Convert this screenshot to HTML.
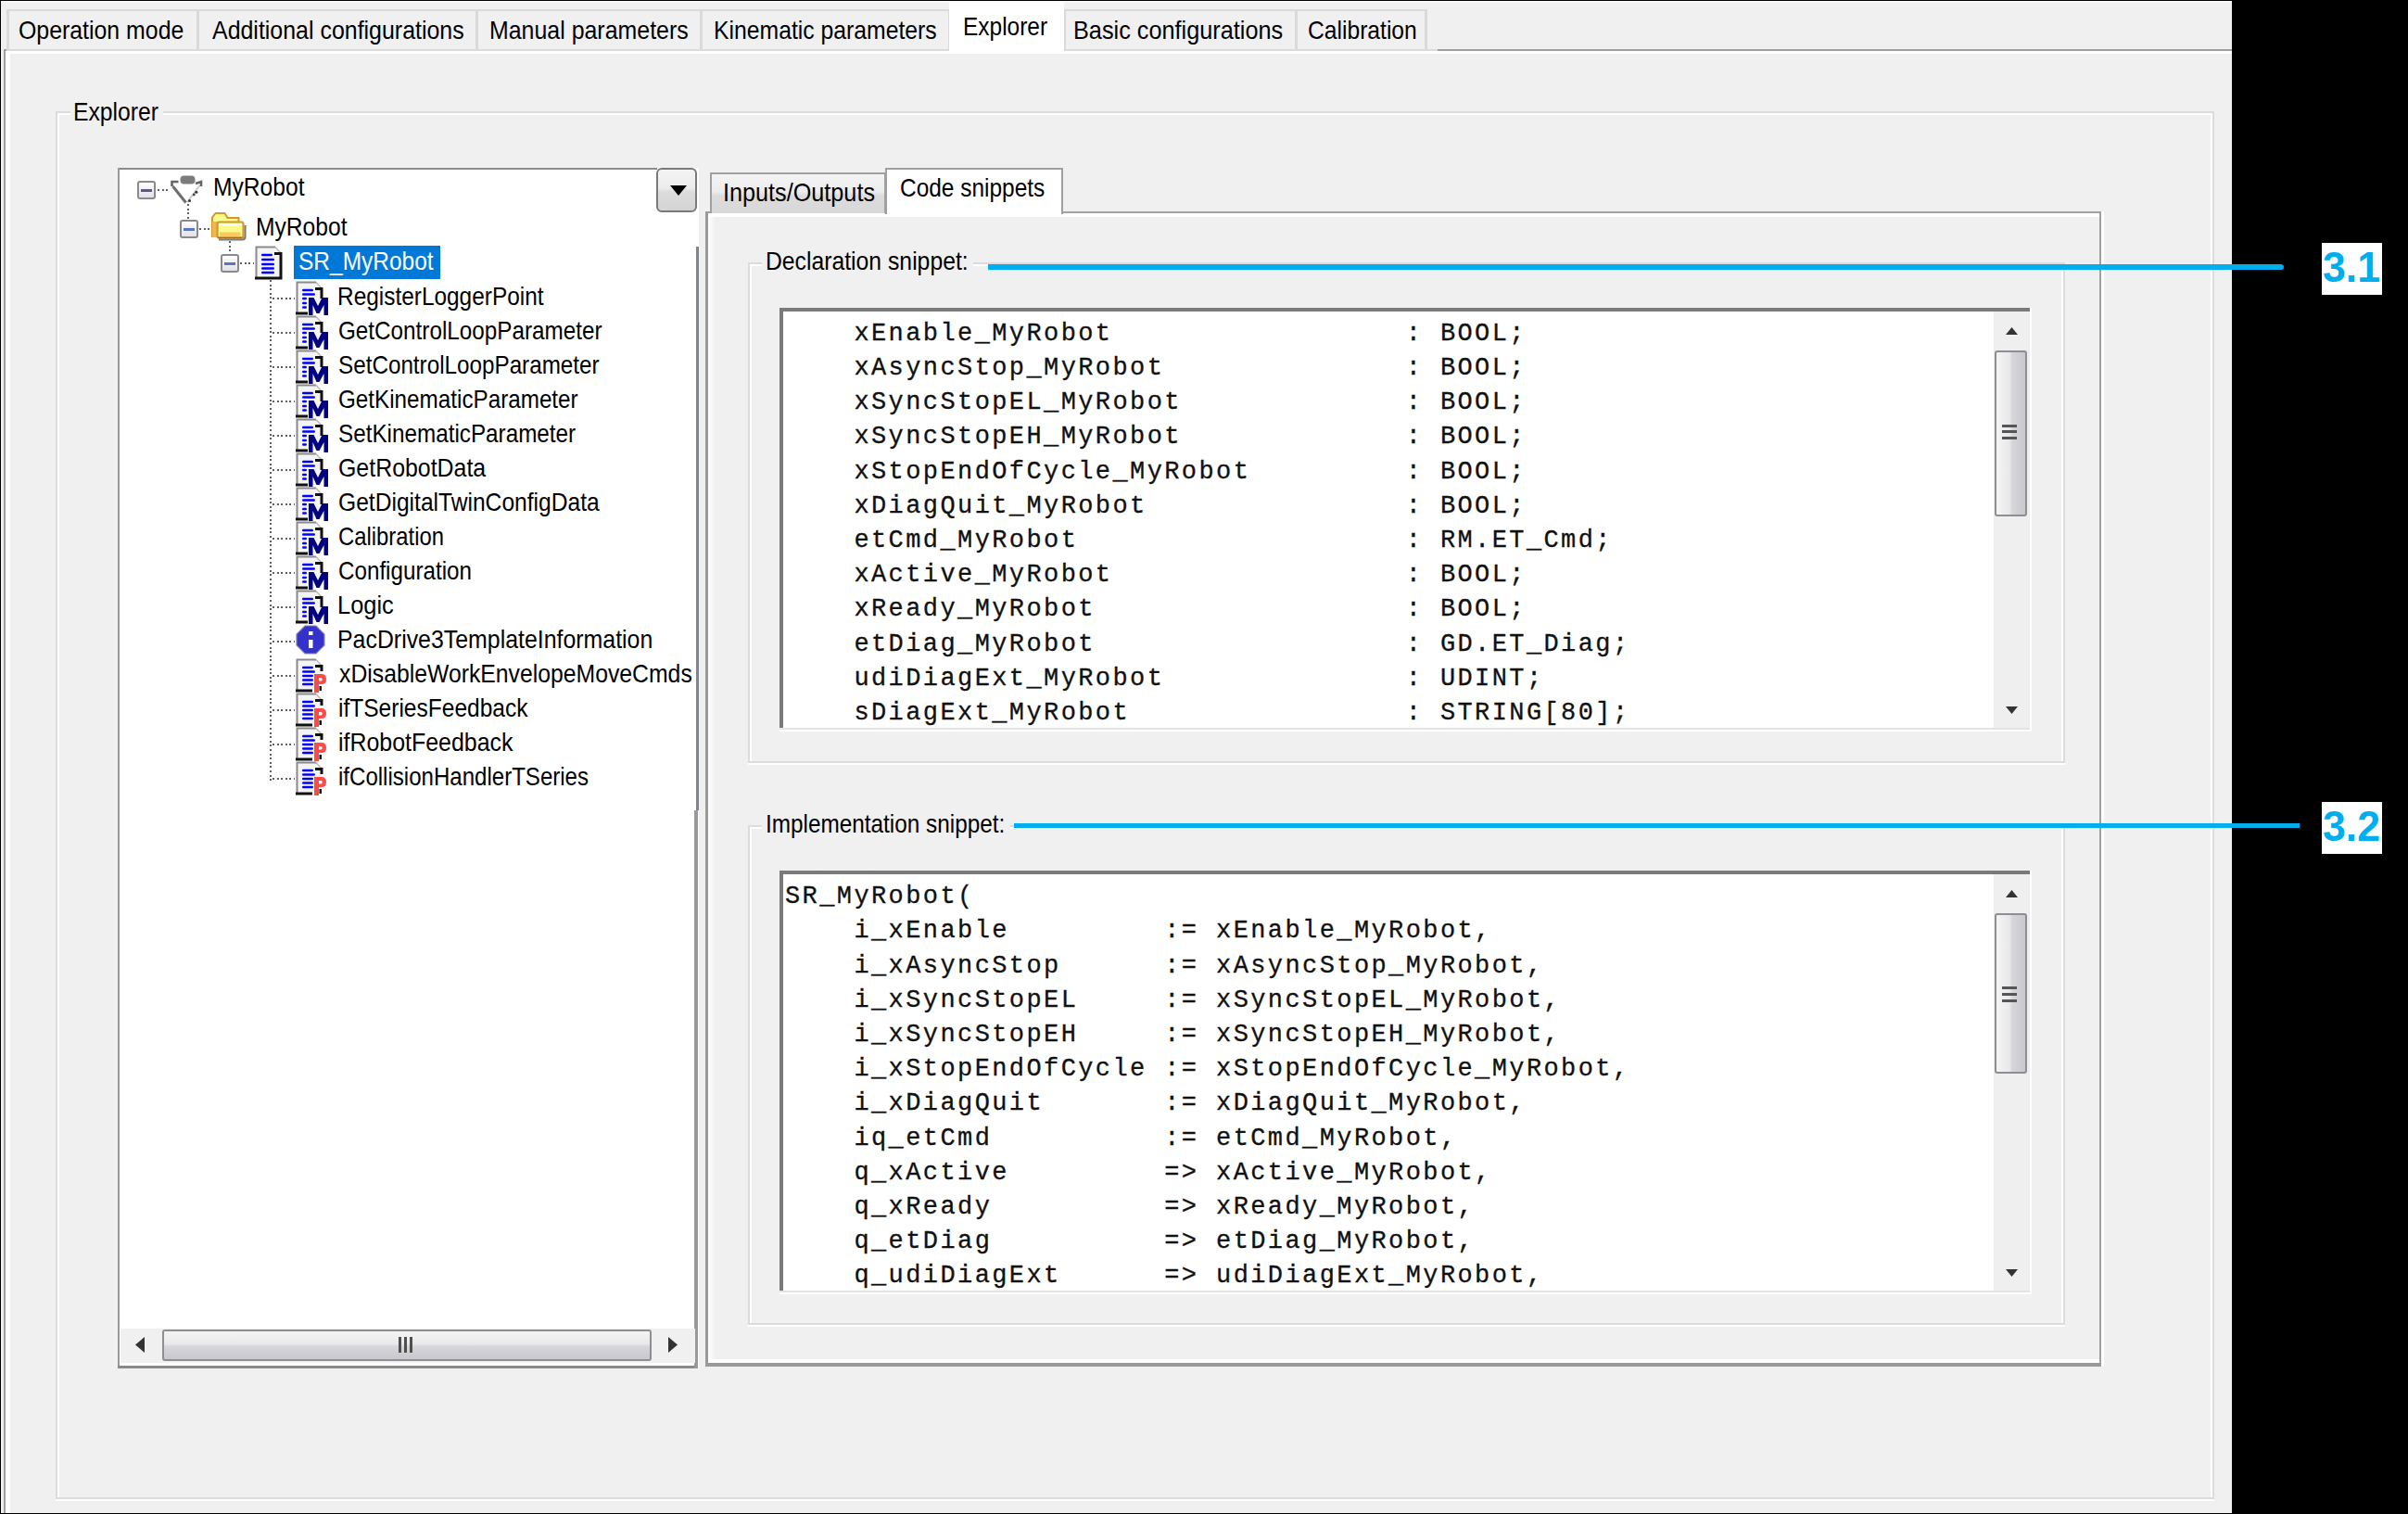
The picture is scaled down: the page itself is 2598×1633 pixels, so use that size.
<!DOCTYPE html><html><head><meta charset="utf-8"><style>
html,body{margin:0;padding:0;}
body{width:2598px;height:1633px;background:#000;position:relative;overflow:hidden;font-family:"Liberation Sans",sans-serif;}
.u{position:absolute;white-space:pre;transform-origin:0 0;font-family:"Liberation Sans",sans-serif;}
.c{position:absolute;white-space:pre;font-family:"Liberation Mono",monospace;font-size:27px;line-height:27px;letter-spacing:2.4px;color:#111;-webkit-text-stroke:0.3px #111;}
</style></head><body>

<div style="position:absolute;left:1px;top:1px;width:2407px;height:1631px;background:#f0f0f0;"></div>
<div style="position:absolute;left:4px;top:53px;width:2404px;height:2px;background:#a0a0a0;"></div>
<div style="position:absolute;left:4px;top:53px;width:2px;height:1579px;background:#a0a0a0;"></div>
<div style="position:absolute;left:6px;top:55px;width:2402px;height:3px;background:#fff;"></div>
<div style="position:absolute;left:6px;top:55px;width:5px;height:1577px;background:#fff;"></div>
<div style="position:absolute;left:1px;top:1px;width:2407px;height:2px;background:#f8f8f8;"></div>
<div style="position:absolute;left:8px;top:10px;width:1531px;height:2px;background:#dadada;"></div>
<div style="position:absolute;left:8px;top:53px;width:1543px;height:2px;background:#dadada;"></div>
<div style="position:absolute;left:7px;top:10px;width:2.5px;height:45px;background:#dadada;"></div>
<div style="position:absolute;left:212px;top:10px;width:2.5px;height:45px;background:#dadada;"></div>
<div style="position:absolute;left:212px;top:10px;width:2.5px;height:45px;background:#dadada;"></div>
<div style="position:absolute;left:513px;top:10px;width:2.5px;height:45px;background:#dadada;"></div>
<div style="position:absolute;left:513px;top:10px;width:2.5px;height:45px;background:#dadada;"></div>
<div style="position:absolute;left:755px;top:10px;width:2.5px;height:45px;background:#dadada;"></div>
<div style="position:absolute;left:755px;top:10px;width:2.5px;height:45px;background:#dadada;"></div>
<div style="position:absolute;left:1023px;top:10px;width:2.5px;height:45px;background:#dadada;"></div>
<div style="position:absolute;left:1147px;top:10px;width:2.5px;height:45px;background:#dadada;"></div>
<div style="position:absolute;left:1397px;top:10px;width:2.5px;height:45px;background:#dadada;"></div>
<div style="position:absolute;left:1397px;top:10px;width:2.5px;height:45px;background:#dadada;"></div>
<div style="position:absolute;left:1537px;top:10px;width:2.5px;height:45px;background:#dadada;"></div>
<div style="position:absolute;left:1024px;top:2px;width:124px;height:56px;background:#fff;"></div>
<div style="position:absolute;left:60px;top:120px;width:2329px;height:2px;background:#dcdcdc;"></div>
<div style="position:absolute;left:60px;top:120px;width:2px;height:1499px;background:#dcdcdc;"></div>
<div style="position:absolute;left:62px;top:122px;width:2327px;height:2px;background:#fff;"></div>
<div style="position:absolute;left:62px;top:122px;width:2px;height:1497px;background:#fff;"></div>
<div style="position:absolute;left:2387px;top:120px;width:2px;height:1499px;background:#dcdcdc;"></div>
<div style="position:absolute;left:2385px;top:122px;width:2px;height:1495px;background:#fff;"></div>
<div style="position:absolute;left:60px;top:1617px;width:2329px;height:2px;background:#fff;"></div>
<div style="position:absolute;left:62px;top:1615px;width:2325px;height:2px;background:#dcdcdc;"></div>
<div style="position:absolute;left:76px;top:108px;width:100px;height:20px;background:#f0f0f0;"></div>
<div style="position:absolute;left:127px;top:181px;width:627px;height:1295px;background:#fff;"></div>
<div style="position:absolute;left:127px;top:181px;width:582px;height:2px;background:#8c8c8c;"></div>
<div style="position:absolute;left:127px;top:181px;width:2px;height:1295px;background:#999;"></div>
<div style="position:absolute;left:127px;top:1473px;width:626px;height:3px;background:#8a8a8a;"></div>
<div style="position:absolute;left:751px;top:266px;width:3px;height:608px;background:#7f8590;"></div>
<div style="position:absolute;left:749px;top:874px;width:4px;height:602px;background:#999;"></div>
<div style="position:absolute;left:708px;top:181px;width:44px;height:48px;box-sizing:border-box;border:2px solid #7a7a7a;border-radius:6px;background:linear-gradient(#f4f4f4 0%,#ececec 45%,#dcdcdc 55%,#d4d4d4 100%);"></div>
<svg style="position:absolute;left:723px;top:200px" width="19" height="12"><polygon points="0,0 18,0 9,11" fill="#000"/></svg>
<div style="position:absolute;left:130px;top:1433px;width:620px;height:37px;background:#f0f0f0;"></div>
<div style="position:absolute;left:175px;top:1434px;width:528px;height:34px;box-sizing:border-box;border:2px solid #8e8f94;border-radius:3px;background:linear-gradient(#f4f4f5 0%,#e9e9eb 45%,#d6d6da 55%,#c8c8cd 100%);"></div>
<svg style="position:absolute;left:145px;top:1442px" width="12" height="18"><polygon points="11,0 11,17 1,8.5" fill="#333"/></svg>
<svg style="position:absolute;left:720px;top:1442px" width="12" height="18"><polygon points="1,0 1,17 11,8.5" fill="#333"/></svg>
<div style="position:absolute;left:430px;top:1442px;width:3px;height:17px;background:#505050;"></div>
<div style="position:absolute;left:436px;top:1442px;width:3px;height:17px;background:#505050;"></div>
<div style="position:absolute;left:442px;top:1442px;width:3px;height:17px;background:#505050;"></div>
<div style="position:absolute;left:761px;top:228px;width:1509px;height:1246px;background:#f0f0f0;"></div>
<div style="position:absolute;left:761px;top:228px;width:1509px;height:2px;background:#a0a0a0;"></div>
<div style="position:absolute;left:761px;top:228px;width:3px;height:1246px;background:#999;"></div>
<div style="position:absolute;left:2265px;top:228px;width:2px;height:1246px;background:#a0a0a0;"></div>
<div style="position:absolute;left:761px;top:1470px;width:1507px;height:4px;background:#999;"></div>
<div style="position:absolute;left:764px;top:230px;width:8px;height:1240px;background:linear-gradient(90deg,#fff,#f0f0f0);"></div>
<div style="position:absolute;left:764px;top:230px;width:1501px;height:4px;background:#fff;"></div>
<div style="position:absolute;left:2267px;top:228px;width:3px;height:1246px;background:#fff;"></div>
<div style="position:absolute;left:764px;top:1466px;width:1501px;height:4px;background:#fff;"></div>
<div style="position:absolute;left:766px;top:186px;width:190px;height:44px;box-sizing:border-box;border:2px solid #a0a0a0;border-bottom:none;background:linear-gradient(#f4f4f4 0%,#ececec 45%,#dcdcdc 55%,#d8d8d8 100%);"></div>
<div style="position:absolute;left:955px;top:181px;width:192px;height:50px;box-sizing:border-box;border:2px solid #a0a0a0;border-bottom:none;background:#fff;"></div>
<div style="position:absolute;left:807px;top:283px;width:1421px;height:2px;background:#dcdcdc;"></div>
<div style="position:absolute;left:807px;top:283px;width:2px;height:542px;background:#dcdcdc;"></div>
<div style="position:absolute;left:809px;top:285px;width:1419px;height:2px;background:#fff;"></div>
<div style="position:absolute;left:809px;top:285px;width:2px;height:540px;background:#fff;"></div>
<div style="position:absolute;left:2226px;top:283px;width:2px;height:542px;background:#dcdcdc;"></div>
<div style="position:absolute;left:2224px;top:285px;width:2px;height:538px;background:#fff;"></div>
<div style="position:absolute;left:807px;top:823px;width:1421px;height:2px;background:#fff;"></div>
<div style="position:absolute;left:809px;top:821px;width:1417px;height:2px;background:#dcdcdc;"></div>
<div style="position:absolute;left:807px;top:890px;width:1421px;height:2px;background:#dcdcdc;"></div>
<div style="position:absolute;left:807px;top:890px;width:2px;height:541px;background:#dcdcdc;"></div>
<div style="position:absolute;left:809px;top:892px;width:1419px;height:2px;background:#fff;"></div>
<div style="position:absolute;left:809px;top:892px;width:2px;height:539px;background:#fff;"></div>
<div style="position:absolute;left:2226px;top:890px;width:2px;height:541px;background:#dcdcdc;"></div>
<div style="position:absolute;left:2224px;top:892px;width:2px;height:537px;background:#fff;"></div>
<div style="position:absolute;left:807px;top:1429px;width:1421px;height:2px;background:#fff;"></div>
<div style="position:absolute;left:809px;top:1427px;width:1417px;height:2px;background:#dcdcdc;"></div>
<div style="position:absolute;left:822px;top:266px;width:228px;height:32px;background:#f0f0f0;"></div>
<div style="position:absolute;left:822px;top:874px;width:268px;height:32px;background:#f0f0f0;"></div>
<div style="position:absolute;left:841px;top:332px;width:1349px;height:457px;background:#fff;"></div>
<div style="position:absolute;left:841px;top:332px;width:1349px;height:4px;background:#7a7a7a;"></div>
<div style="position:absolute;left:841px;top:332px;width:4px;height:457px;background:#7a7a7a;"></div>
<div style="position:absolute;left:841px;top:785px;width:1351px;height:2px;background:#e3e3e3;"></div>
<div style="position:absolute;left:841px;top:787px;width:1351px;height:2px;background:#fff;"></div>
<div style="position:absolute;left:2190px;top:332px;width:2px;height:457px;background:#fff;"></div>
<div style="position:absolute;left:2151px;top:336px;width:39px;height:449px;background:#efefef;"></div>
<svg style="position:absolute;left:2164px;top:353px" width="14" height="9"><polygon points="0,8 13,8 6.5,0" fill="#333"/></svg>
<svg style="position:absolute;left:2164px;top:762px" width="14" height="9"><polygon points="0,0 13,0 6.5,8" fill="#333"/></svg>
<div style="position:absolute;left:2152px;top:378px;width:35px;height:179px;box-sizing:border-box;border:2px solid #8e8f94;border-radius:3px;background:linear-gradient(90deg,#f4f4f5 0%,#e9e9eb 45%,#d6d6da 55%,#c8c8cd 100%);"></div>
<div style="position:absolute;left:2160px;top:457.5px;width:16px;height:3.0px;background:#555;"></div>
<div style="position:absolute;left:2160px;top:464.3px;width:16px;height:3.0px;background:#555;"></div>
<div style="position:absolute;left:2160px;top:471.1px;width:16px;height:3.0px;background:#555;"></div>
<div style="position:absolute;left:841px;top:939px;width:1349px;height:457px;background:#fff;"></div>
<div style="position:absolute;left:841px;top:939px;width:1349px;height:4px;background:#7a7a7a;"></div>
<div style="position:absolute;left:841px;top:939px;width:4px;height:457px;background:#7a7a7a;"></div>
<div style="position:absolute;left:841px;top:1392px;width:1351px;height:2px;background:#e3e3e3;"></div>
<div style="position:absolute;left:841px;top:1394px;width:1351px;height:2px;background:#fff;"></div>
<div style="position:absolute;left:2190px;top:939px;width:2px;height:457px;background:#fff;"></div>
<div style="position:absolute;left:2151px;top:943px;width:39px;height:449px;background:#efefef;"></div>
<svg style="position:absolute;left:2164px;top:960px" width="14" height="9"><polygon points="0,8 13,8 6.5,0" fill="#333"/></svg>
<svg style="position:absolute;left:2164px;top:1369px" width="14" height="9"><polygon points="0,0 13,0 6.5,8" fill="#333"/></svg>
<div style="position:absolute;left:2152px;top:985px;width:35px;height:173px;box-sizing:border-box;border:2px solid #8e8f94;border-radius:3px;background:linear-gradient(90deg,#f4f4f5 0%,#e9e9eb 45%,#d6d6da 55%,#c8c8cd 100%);"></div>
<div style="position:absolute;left:2160px;top:1064.0px;width:16px;height:3.0px;background:#555;"></div>
<div style="position:absolute;left:2160px;top:1070.8px;width:16px;height:3.0px;background:#555;"></div>
<div style="position:absolute;left:2160px;top:1077.6px;width:16px;height:3.0px;background:#555;"></div>
<div style="position:absolute;left:1066px;top:285px;width:1398px;height:6px;background:#00aeef;border-radius:0 3px 3px 0;"></div>
<div style="position:absolute;left:1094px;top:888px;width:1387px;height:5px;background:#00aeef;"></div>
<div style="position:absolute;left:2505px;top:262px;width:65px;height:56px;background:#fff;"></div>
<div style="position:absolute;left:2505px;top:865px;width:65px;height:56px;background:#fff;"></div>
<div class="u" style="left:19.6px;top:18.8px;font-size:28px;line-height:28px;color:#000;transform:scaleX(0.888);">Operation mode</div>
<div class="u" style="left:228.7px;top:18.8px;font-size:28px;line-height:28px;color:#000;transform:scaleX(0.8905);">Additional configurations</div>
<div class="u" style="left:528.2px;top:18.8px;font-size:28px;line-height:28px;color:#000;transform:scaleX(0.8899);">Manual parameters</div>
<div class="u" style="left:770.2px;top:18.8px;font-size:28px;line-height:28px;color:#000;transform:scaleX(0.8837);">Kinematic parameters</div>
<div class="u" style="left:1039.3px;top:14.9px;font-size:28px;line-height:28px;color:#000;transform:scaleX(0.8731);">Explorer</div>
<div class="u" style="left:1157.7px;top:18.8px;font-size:28px;line-height:28px;color:#000;transform:scaleX(0.9027);">Basic configurations</div>
<div class="u" style="left:1411.1px;top:18.8px;font-size:28px;line-height:28px;color:#000;transform:scaleX(0.8798);">Calibration</div>
<div class="u" style="left:79.2px;top:107.3px;font-size:28px;line-height:28px;color:#000;transform:scaleX(0.8829);">Explorer</div>
<div class="u" style="left:779.9px;top:194.1px;font-size:28px;line-height:28px;color:#000;transform:scaleX(0.9006);">Inputs/Outputs</div>
<div class="u" style="left:971.1px;top:189.2px;font-size:28px;line-height:28px;color:#000;transform:scaleX(0.8729);">Code snippets</div>
<div class="u" style="left:825.7px;top:267.5px;font-size:28px;line-height:28px;color:#000;transform:scaleX(0.8835);">Declaration snippet:</div>
<div class="u" style="left:826.3px;top:875.3px;font-size:28px;line-height:28px;color:#000;transform:scaleX(0.8688);">Implementation snippet:</div>
<div class="u" style="left:230.2px;top:188.3px;font-size:28px;line-height:28px;color:#000;transform:scaleX(0.8797);">MyRobot</div>
<div class="u" style="left:276.2px;top:231.0px;font-size:28px;line-height:28px;color:#000;transform:scaleX(0.8797);">MyRobot</div>
<div class="u" style="left:363.8px;top:305.8px;font-size:28px;line-height:28px;color:#000;transform:scaleX(0.8718);">RegisterLoggerPoint</div>
<div class="u" style="left:364.6px;top:342.8px;font-size:28px;line-height:28px;color:#000;transform:scaleX(0.8662);">GetControlLoopParameter</div>
<div class="u" style="left:364.6px;top:379.8px;font-size:28px;line-height:28px;color:#000;transform:scaleX(0.8658);">SetControlLoopParameter</div>
<div class="u" style="left:364.6px;top:416.8px;font-size:28px;line-height:28px;color:#000;transform:scaleX(0.8657);">GetKinematicParameter</div>
<div class="u" style="left:364.6px;top:453.8px;font-size:28px;line-height:28px;color:#000;transform:scaleX(0.8663);">SetKinematicParameter</div>
<div class="u" style="left:364.6px;top:490.8px;font-size:28px;line-height:28px;color:#000;transform:scaleX(0.8895);">GetRobotData</div>
<div class="u" style="left:364.6px;top:527.8px;font-size:28px;line-height:28px;color:#000;transform:scaleX(0.8787);">GetDigitalTwinConfigData</div>
<div class="u" style="left:364.6px;top:564.8px;font-size:28px;line-height:28px;color:#000;transform:scaleX(0.8516);">Calibration</div>
<div class="u" style="left:364.6px;top:601.8px;font-size:28px;line-height:28px;color:#000;transform:scaleX(0.8641);">Configuration</div>
<div class="u" style="left:363.7px;top:638.8px;font-size:28px;line-height:28px;color:#000;transform:scaleX(0.9086);">Logic</div>
<div class="u" style="left:363.7px;top:675.8px;font-size:28px;line-height:28px;color:#000;transform:scaleX(0.8888);">PacDrive3TemplateInformation</div>
<div class="u" style="left:365.5px;top:712.8px;font-size:28px;line-height:28px;color:#000;transform:scaleX(0.8844);">xDisableWorkEnvelopeMoveCmds</div>
<div class="u" style="left:364.6px;top:749.8px;font-size:28px;line-height:28px;color:#000;transform:scaleX(0.8761);">ifTSeriesFeedback</div>
<div class="u" style="left:364.6px;top:786.8px;font-size:28px;line-height:28px;color:#000;transform:scaleX(0.8905);">ifRobotFeedback</div>
<div class="u" style="left:364.6px;top:823.8px;font-size:28px;line-height:28px;color:#000;transform:scaleX(0.859);">ifCollisionHandlerTSeries</div>
<div style="position:absolute;left:317px;top:265px;width:158px;height:36px;background:#0078d7;"></div>
<div class="u" style="left:322.1px;top:268.3px;font-size:28px;line-height:28px;color:#fff;transform:scaleX(0.8749);">SR_MyRobot</div>
<div style="position:absolute;left:148px;top:195px;width:20px;height:20px;box-sizing:border-box;border:2px solid #8a8a8a;border-radius:3px;background:linear-gradient(#fdfdfd,#e2e2ea);"></div>
<div style="position:absolute;left:152px;top:204px;width:12px;height:3px;background:#5a5a7a;"></div>
<div style="position:absolute;left:194px;top:237px;width:20px;height:20px;box-sizing:border-box;border:2px solid #8a8a8a;border-radius:3px;background:linear-gradient(#fdfdfd,#e2e2ea);"></div>
<div style="position:absolute;left:198px;top:246px;width:12px;height:3px;background:#5a78c0;"></div>
<div style="position:absolute;left:238px;top:274px;width:20px;height:20px;box-sizing:border-box;border:2px solid #8a8a8a;border-radius:3px;background:linear-gradient(#fdfdfd,#e2e2ea);"></div>
<div style="position:absolute;left:242px;top:283px;width:12px;height:3px;background:#5a78c0;"></div>
<div style="position:absolute;left:170px;top:204px;width:14px;height:2px;background:repeating-linear-gradient(90deg,#606060 0 2px,transparent 2px 4.6px);"></div>
<div style="position:absolute;left:201.5px;top:220px;width:2px;height:17px;background:repeating-linear-gradient(180deg,#606060 0 2px,transparent 2px 4.6px);"></div>
<div style="position:absolute;left:215px;top:246px;width:13px;height:2px;background:repeating-linear-gradient(90deg,#606060 0 2px,transparent 2px 4.6px);"></div>
<div style="position:absolute;left:247px;top:260px;width:2px;height:14px;background:repeating-linear-gradient(180deg,#606060 0 2px,transparent 2px 4.6px);"></div>
<div style="position:absolute;left:259px;top:283px;width:15px;height:2px;background:repeating-linear-gradient(90deg,#606060 0 2px,transparent 2px 4.6px);"></div>
<div style="position:absolute;left:291px;top:302px;width:2px;height:539.5px;background:repeating-linear-gradient(180deg,#606060 0 2px,transparent 2px 4.6px);"></div>
<div style="position:absolute;left:294px;top:320.5px;width:24px;height:2px;background:repeating-linear-gradient(90deg,#606060 0 2px,transparent 2px 4.6px);"></div>
<div style="position:absolute;left:294px;top:357.5px;width:24px;height:2px;background:repeating-linear-gradient(90deg,#606060 0 2px,transparent 2px 4.6px);"></div>
<div style="position:absolute;left:294px;top:394.5px;width:24px;height:2px;background:repeating-linear-gradient(90deg,#606060 0 2px,transparent 2px 4.6px);"></div>
<div style="position:absolute;left:294px;top:431.5px;width:24px;height:2px;background:repeating-linear-gradient(90deg,#606060 0 2px,transparent 2px 4.6px);"></div>
<div style="position:absolute;left:294px;top:468.5px;width:24px;height:2px;background:repeating-linear-gradient(90deg,#606060 0 2px,transparent 2px 4.6px);"></div>
<div style="position:absolute;left:294px;top:505.5px;width:24px;height:2px;background:repeating-linear-gradient(90deg,#606060 0 2px,transparent 2px 4.6px);"></div>
<div style="position:absolute;left:294px;top:542.5px;width:24px;height:2px;background:repeating-linear-gradient(90deg,#606060 0 2px,transparent 2px 4.6px);"></div>
<div style="position:absolute;left:294px;top:579.5px;width:24px;height:2px;background:repeating-linear-gradient(90deg,#606060 0 2px,transparent 2px 4.6px);"></div>
<div style="position:absolute;left:294px;top:616.5px;width:24px;height:2px;background:repeating-linear-gradient(90deg,#606060 0 2px,transparent 2px 4.6px);"></div>
<div style="position:absolute;left:294px;top:653.5px;width:24px;height:2px;background:repeating-linear-gradient(90deg,#606060 0 2px,transparent 2px 4.6px);"></div>
<div style="position:absolute;left:294px;top:690.5px;width:24px;height:2px;background:repeating-linear-gradient(90deg,#606060 0 2px,transparent 2px 4.6px);"></div>
<div style="position:absolute;left:294px;top:727.5px;width:24px;height:2px;background:repeating-linear-gradient(90deg,#606060 0 2px,transparent 2px 4.6px);"></div>
<div style="position:absolute;left:294px;top:764.5px;width:24px;height:2px;background:repeating-linear-gradient(90deg,#606060 0 2px,transparent 2px 4.6px);"></div>
<div style="position:absolute;left:294px;top:801.5px;width:24px;height:2px;background:repeating-linear-gradient(90deg,#606060 0 2px,transparent 2px 4.6px);"></div>
<div style="position:absolute;left:294px;top:838.5px;width:24px;height:2px;background:repeating-linear-gradient(90deg,#606060 0 2px,transparent 2px 4.6px);"></div>
<svg style="position:absolute;left:180px;top:184px" width="46" height="40" viewBox="0 0 46 40">
<path d="M35.5,16 L22,34" stroke="#c8c8c8" stroke-width="2" fill="none"/>
<path d="M6.5,17 L20.5,34.5" stroke="#6e6e6e" stroke-width="3" fill="none"/>
<path d="M5.5,17 V12 H12.5" stroke="#666" stroke-width="2.6" fill="none"/>
<path d="M31,14 L37,12 V17" stroke="#666" stroke-width="2.6" fill="none"/>
<rect x="14.5" y="5.5" width="16" height="9" rx="4" fill="#7c7c7c"/>
<circle cx="31.8" cy="23.3" r="1.5" fill="#333"/><circle cx="29.3" cy="26" r="1.4" fill="#444"/><circle cx="24.5" cy="32.5" r="1.5" fill="#333"/>
</svg>
<svg style="position:absolute;left:224px;top:222px" width="46" height="40" viewBox="0 0 46 40">
<path d="M5,34 V12.5 L8.5,8 H18.5 L21.5,13 H33.5 V18 H10z" fill="#fafa8a" stroke="#d09a30" stroke-width="2"/>
<rect x="5" y="17" width="6" height="17" fill="#f2b850"/>
<path d="M12,36.5 H37.5 Q40.5,36.5 40.5,33.5 V21" stroke="#5a5a5a" stroke-width="2.2" fill="none" opacity="0.8"/>
<rect x="10.5" y="17.5" width="28" height="17" rx="2" fill="#fafa8a" stroke="#cf9a2e" stroke-width="2.2"/>
<rect x="13" y="28.5" width="22.5" height="5" fill="#fcc860"/>
<rect x="12" y="19.5" width="25" height="1.8" fill="#fff"/>
<path d="M11.5,34.5 H37.5" stroke="#a06a10" stroke-width="1.6"/>
</svg>
<svg style="position:absolute;left:274.5px;top:264.5px" width="31" height="37" viewBox="0 0 31 37"><path d="M1.5,35 V1.5 H22 L28,8 V35z" fill="#f4f4f4"/><path d="M1.5,35 V1.5 H22" fill="none" stroke="#8a8a8a" stroke-width="2"/><path d="M22,1.5 L28,8" fill="none" stroke="#bbb" stroke-width="1.5"/><path d="M21,8.5 H28 V35 H0" fill="none" stroke="#111" stroke-width="3"/><rect x="7" y="8.7" width="12" height="2.6" rx="1.3" fill="#0000ff"/><rect x="7" y="13.7" width="14" height="2.6" rx="1.3" fill="#0000ff"/><rect x="7" y="18.7" width="14" height="2.6" rx="1.3" fill="#0000ff"/><rect x="7" y="23.2" width="14" height="2.6" rx="1.3" fill="#0000ff"/><rect x="7" y="27.7" width="14" height="2.6" rx="1.3" fill="#0000ff"/></svg>
<svg style="position:absolute;left:319px;top:302.5px" width="37" height="38" viewBox="0 0 37 38"><path d="M1.5,35 V1.5 H22 L28,8 V35z" fill="#f4f4f4"/><path d="M1.5,35 V1.5 H22" fill="none" stroke="#8a8a8a" stroke-width="2"/><path d="M22,1.5 L28,8" fill="none" stroke="#bbb" stroke-width="1.5"/><path d="M21,8.5 H28 V19" fill="none" stroke="#111" stroke-width="3"/><path d="M0,35 H13" fill="none" stroke="#111" stroke-width="3"/><rect x="7" y="8.7" width="12" height="2.6" rx="1.3" fill="#0000ff"/><rect x="7" y="13.2" width="14" height="2.6" rx="1.3" fill="#0000ff"/><rect x="7" y="17.7" width="5" height="2.6" rx="1.3" fill="#0000ff"/><rect x="7" y="22.7" width="5" height="2.6" rx="1.3" fill="#0000ff"/><rect x="7" y="27.2" width="5" height="2.6" rx="1.3" fill="#0000ff"/><path d="M14,37 V18 H19.5 L24,27 L28.5,18 H35 V37 H30.5 V26 L25.5,35 H22.5 L18.5,26 V37z" fill="#000080"/></svg>
<svg style="position:absolute;left:319px;top:339.5px" width="37" height="38" viewBox="0 0 37 38"><path d="M1.5,35 V1.5 H22 L28,8 V35z" fill="#f4f4f4"/><path d="M1.5,35 V1.5 H22" fill="none" stroke="#8a8a8a" stroke-width="2"/><path d="M22,1.5 L28,8" fill="none" stroke="#bbb" stroke-width="1.5"/><path d="M21,8.5 H28 V19" fill="none" stroke="#111" stroke-width="3"/><path d="M0,35 H13" fill="none" stroke="#111" stroke-width="3"/><rect x="7" y="8.7" width="12" height="2.6" rx="1.3" fill="#0000ff"/><rect x="7" y="13.2" width="14" height="2.6" rx="1.3" fill="#0000ff"/><rect x="7" y="17.7" width="5" height="2.6" rx="1.3" fill="#0000ff"/><rect x="7" y="22.7" width="5" height="2.6" rx="1.3" fill="#0000ff"/><rect x="7" y="27.2" width="5" height="2.6" rx="1.3" fill="#0000ff"/><path d="M14,37 V18 H19.5 L24,27 L28.5,18 H35 V37 H30.5 V26 L25.5,35 H22.5 L18.5,26 V37z" fill="#000080"/></svg>
<svg style="position:absolute;left:319px;top:376.5px" width="37" height="38" viewBox="0 0 37 38"><path d="M1.5,35 V1.5 H22 L28,8 V35z" fill="#f4f4f4"/><path d="M1.5,35 V1.5 H22" fill="none" stroke="#8a8a8a" stroke-width="2"/><path d="M22,1.5 L28,8" fill="none" stroke="#bbb" stroke-width="1.5"/><path d="M21,8.5 H28 V19" fill="none" stroke="#111" stroke-width="3"/><path d="M0,35 H13" fill="none" stroke="#111" stroke-width="3"/><rect x="7" y="8.7" width="12" height="2.6" rx="1.3" fill="#0000ff"/><rect x="7" y="13.2" width="14" height="2.6" rx="1.3" fill="#0000ff"/><rect x="7" y="17.7" width="5" height="2.6" rx="1.3" fill="#0000ff"/><rect x="7" y="22.7" width="5" height="2.6" rx="1.3" fill="#0000ff"/><rect x="7" y="27.2" width="5" height="2.6" rx="1.3" fill="#0000ff"/><path d="M14,37 V18 H19.5 L24,27 L28.5,18 H35 V37 H30.5 V26 L25.5,35 H22.5 L18.5,26 V37z" fill="#000080"/></svg>
<svg style="position:absolute;left:319px;top:413.5px" width="37" height="38" viewBox="0 0 37 38"><path d="M1.5,35 V1.5 H22 L28,8 V35z" fill="#f4f4f4"/><path d="M1.5,35 V1.5 H22" fill="none" stroke="#8a8a8a" stroke-width="2"/><path d="M22,1.5 L28,8" fill="none" stroke="#bbb" stroke-width="1.5"/><path d="M21,8.5 H28 V19" fill="none" stroke="#111" stroke-width="3"/><path d="M0,35 H13" fill="none" stroke="#111" stroke-width="3"/><rect x="7" y="8.7" width="12" height="2.6" rx="1.3" fill="#0000ff"/><rect x="7" y="13.2" width="14" height="2.6" rx="1.3" fill="#0000ff"/><rect x="7" y="17.7" width="5" height="2.6" rx="1.3" fill="#0000ff"/><rect x="7" y="22.7" width="5" height="2.6" rx="1.3" fill="#0000ff"/><rect x="7" y="27.2" width="5" height="2.6" rx="1.3" fill="#0000ff"/><path d="M14,37 V18 H19.5 L24,27 L28.5,18 H35 V37 H30.5 V26 L25.5,35 H22.5 L18.5,26 V37z" fill="#000080"/></svg>
<svg style="position:absolute;left:319px;top:450.5px" width="37" height="38" viewBox="0 0 37 38"><path d="M1.5,35 V1.5 H22 L28,8 V35z" fill="#f4f4f4"/><path d="M1.5,35 V1.5 H22" fill="none" stroke="#8a8a8a" stroke-width="2"/><path d="M22,1.5 L28,8" fill="none" stroke="#bbb" stroke-width="1.5"/><path d="M21,8.5 H28 V19" fill="none" stroke="#111" stroke-width="3"/><path d="M0,35 H13" fill="none" stroke="#111" stroke-width="3"/><rect x="7" y="8.7" width="12" height="2.6" rx="1.3" fill="#0000ff"/><rect x="7" y="13.2" width="14" height="2.6" rx="1.3" fill="#0000ff"/><rect x="7" y="17.7" width="5" height="2.6" rx="1.3" fill="#0000ff"/><rect x="7" y="22.7" width="5" height="2.6" rx="1.3" fill="#0000ff"/><rect x="7" y="27.2" width="5" height="2.6" rx="1.3" fill="#0000ff"/><path d="M14,37 V18 H19.5 L24,27 L28.5,18 H35 V37 H30.5 V26 L25.5,35 H22.5 L18.5,26 V37z" fill="#000080"/></svg>
<svg style="position:absolute;left:319px;top:487.5px" width="37" height="38" viewBox="0 0 37 38"><path d="M1.5,35 V1.5 H22 L28,8 V35z" fill="#f4f4f4"/><path d="M1.5,35 V1.5 H22" fill="none" stroke="#8a8a8a" stroke-width="2"/><path d="M22,1.5 L28,8" fill="none" stroke="#bbb" stroke-width="1.5"/><path d="M21,8.5 H28 V19" fill="none" stroke="#111" stroke-width="3"/><path d="M0,35 H13" fill="none" stroke="#111" stroke-width="3"/><rect x="7" y="8.7" width="12" height="2.6" rx="1.3" fill="#0000ff"/><rect x="7" y="13.2" width="14" height="2.6" rx="1.3" fill="#0000ff"/><rect x="7" y="17.7" width="5" height="2.6" rx="1.3" fill="#0000ff"/><rect x="7" y="22.7" width="5" height="2.6" rx="1.3" fill="#0000ff"/><rect x="7" y="27.2" width="5" height="2.6" rx="1.3" fill="#0000ff"/><path d="M14,37 V18 H19.5 L24,27 L28.5,18 H35 V37 H30.5 V26 L25.5,35 H22.5 L18.5,26 V37z" fill="#000080"/></svg>
<svg style="position:absolute;left:319px;top:524.5px" width="37" height="38" viewBox="0 0 37 38"><path d="M1.5,35 V1.5 H22 L28,8 V35z" fill="#f4f4f4"/><path d="M1.5,35 V1.5 H22" fill="none" stroke="#8a8a8a" stroke-width="2"/><path d="M22,1.5 L28,8" fill="none" stroke="#bbb" stroke-width="1.5"/><path d="M21,8.5 H28 V19" fill="none" stroke="#111" stroke-width="3"/><path d="M0,35 H13" fill="none" stroke="#111" stroke-width="3"/><rect x="7" y="8.7" width="12" height="2.6" rx="1.3" fill="#0000ff"/><rect x="7" y="13.2" width="14" height="2.6" rx="1.3" fill="#0000ff"/><rect x="7" y="17.7" width="5" height="2.6" rx="1.3" fill="#0000ff"/><rect x="7" y="22.7" width="5" height="2.6" rx="1.3" fill="#0000ff"/><rect x="7" y="27.2" width="5" height="2.6" rx="1.3" fill="#0000ff"/><path d="M14,37 V18 H19.5 L24,27 L28.5,18 H35 V37 H30.5 V26 L25.5,35 H22.5 L18.5,26 V37z" fill="#000080"/></svg>
<svg style="position:absolute;left:319px;top:561.5px" width="37" height="38" viewBox="0 0 37 38"><path d="M1.5,35 V1.5 H22 L28,8 V35z" fill="#f4f4f4"/><path d="M1.5,35 V1.5 H22" fill="none" stroke="#8a8a8a" stroke-width="2"/><path d="M22,1.5 L28,8" fill="none" stroke="#bbb" stroke-width="1.5"/><path d="M21,8.5 H28 V19" fill="none" stroke="#111" stroke-width="3"/><path d="M0,35 H13" fill="none" stroke="#111" stroke-width="3"/><rect x="7" y="8.7" width="12" height="2.6" rx="1.3" fill="#0000ff"/><rect x="7" y="13.2" width="14" height="2.6" rx="1.3" fill="#0000ff"/><rect x="7" y="17.7" width="5" height="2.6" rx="1.3" fill="#0000ff"/><rect x="7" y="22.7" width="5" height="2.6" rx="1.3" fill="#0000ff"/><rect x="7" y="27.2" width="5" height="2.6" rx="1.3" fill="#0000ff"/><path d="M14,37 V18 H19.5 L24,27 L28.5,18 H35 V37 H30.5 V26 L25.5,35 H22.5 L18.5,26 V37z" fill="#000080"/></svg>
<svg style="position:absolute;left:319px;top:598.5px" width="37" height="38" viewBox="0 0 37 38"><path d="M1.5,35 V1.5 H22 L28,8 V35z" fill="#f4f4f4"/><path d="M1.5,35 V1.5 H22" fill="none" stroke="#8a8a8a" stroke-width="2"/><path d="M22,1.5 L28,8" fill="none" stroke="#bbb" stroke-width="1.5"/><path d="M21,8.5 H28 V19" fill="none" stroke="#111" stroke-width="3"/><path d="M0,35 H13" fill="none" stroke="#111" stroke-width="3"/><rect x="7" y="8.7" width="12" height="2.6" rx="1.3" fill="#0000ff"/><rect x="7" y="13.2" width="14" height="2.6" rx="1.3" fill="#0000ff"/><rect x="7" y="17.7" width="5" height="2.6" rx="1.3" fill="#0000ff"/><rect x="7" y="22.7" width="5" height="2.6" rx="1.3" fill="#0000ff"/><rect x="7" y="27.2" width="5" height="2.6" rx="1.3" fill="#0000ff"/><path d="M14,37 V18 H19.5 L24,27 L28.5,18 H35 V37 H30.5 V26 L25.5,35 H22.5 L18.5,26 V37z" fill="#000080"/></svg>
<svg style="position:absolute;left:319px;top:635.5px" width="37" height="38" viewBox="0 0 37 38"><path d="M1.5,35 V1.5 H22 L28,8 V35z" fill="#f4f4f4"/><path d="M1.5,35 V1.5 H22" fill="none" stroke="#8a8a8a" stroke-width="2"/><path d="M22,1.5 L28,8" fill="none" stroke="#bbb" stroke-width="1.5"/><path d="M21,8.5 H28 V19" fill="none" stroke="#111" stroke-width="3"/><path d="M0,35 H13" fill="none" stroke="#111" stroke-width="3"/><rect x="7" y="8.7" width="12" height="2.6" rx="1.3" fill="#0000ff"/><rect x="7" y="13.2" width="14" height="2.6" rx="1.3" fill="#0000ff"/><rect x="7" y="17.7" width="5" height="2.6" rx="1.3" fill="#0000ff"/><rect x="7" y="22.7" width="5" height="2.6" rx="1.3" fill="#0000ff"/><rect x="7" y="27.2" width="5" height="2.6" rx="1.3" fill="#0000ff"/><path d="M14,37 V18 H19.5 L24,27 L28.5,18 H35 V37 H30.5 V26 L25.5,35 H22.5 L18.5,26 V37z" fill="#000080"/></svg>
<svg style="position:absolute;left:319px;top:673.5px" width="33" height="33" viewBox="0 0 33 33"><path d="M10,1 H22 L31,10 V22 L22,31 H10 L1,22 V10z" fill="#3333cc" stroke="#8888aa" stroke-width="1.2"/><rect x="14" y="7" width="4.5" height="4" fill="#fff"/><rect x="14" y="16" width="4.5" height="9" fill="#fff"/></svg>
<svg style="position:absolute;left:319px;top:709.5px" width="37" height="38" viewBox="0 0 37 38"><path d="M1.5,35 V1.5 H22 L28,8 V35z" fill="#f4f4f4"/><path d="M1.5,35 V1.5 H22" fill="none" stroke="#8a8a8a" stroke-width="2"/><path d="M22,1.5 L28,8" fill="none" stroke="#bbb" stroke-width="1.5"/><path d="M21,8.5 H28 V14" fill="none" stroke="#111" stroke-width="3"/><path d="M0,35 H18" fill="none" stroke="#111" stroke-width="3"/><rect x="25.5" y="30" width="2.5" height="5" fill="#111"/><rect x="7" y="8.7" width="12" height="2.6" rx="1.3" fill="#0000ff"/><rect x="7" y="13.2" width="14" height="2.6" rx="1.3" fill="#0000ff"/><rect x="7" y="17.7" width="12" height="2.6" rx="1.3" fill="#0000ff"/><rect x="7" y="22.2" width="12" height="2.6" rx="1.3" fill="#0000ff"/><rect x="7" y="26.7" width="12" height="2.6" rx="1.3" fill="#0000ff"/><path d="M20,37 V17 H28 Q33,17 33,22.5 Q33,28 28,28 H25 V37z M25,21 V24.5 H27.5 Q28.7,24.5 28.7,22.75 Q28.7,21 27.5,21z" fill="#ff4a4a" fill-rule="evenodd"/></svg>
<svg style="position:absolute;left:319px;top:746.5px" width="37" height="38" viewBox="0 0 37 38"><path d="M1.5,35 V1.5 H22 L28,8 V35z" fill="#f4f4f4"/><path d="M1.5,35 V1.5 H22" fill="none" stroke="#8a8a8a" stroke-width="2"/><path d="M22,1.5 L28,8" fill="none" stroke="#bbb" stroke-width="1.5"/><path d="M21,8.5 H28 V14" fill="none" stroke="#111" stroke-width="3"/><path d="M0,35 H18" fill="none" stroke="#111" stroke-width="3"/><rect x="25.5" y="30" width="2.5" height="5" fill="#111"/><rect x="7" y="8.7" width="12" height="2.6" rx="1.3" fill="#0000ff"/><rect x="7" y="13.2" width="14" height="2.6" rx="1.3" fill="#0000ff"/><rect x="7" y="17.7" width="12" height="2.6" rx="1.3" fill="#0000ff"/><rect x="7" y="22.2" width="12" height="2.6" rx="1.3" fill="#0000ff"/><rect x="7" y="26.7" width="12" height="2.6" rx="1.3" fill="#0000ff"/><path d="M20,37 V17 H28 Q33,17 33,22.5 Q33,28 28,28 H25 V37z M25,21 V24.5 H27.5 Q28.7,24.5 28.7,22.75 Q28.7,21 27.5,21z" fill="#ff4a4a" fill-rule="evenodd"/></svg>
<svg style="position:absolute;left:319px;top:783.5px" width="37" height="38" viewBox="0 0 37 38"><path d="M1.5,35 V1.5 H22 L28,8 V35z" fill="#f4f4f4"/><path d="M1.5,35 V1.5 H22" fill="none" stroke="#8a8a8a" stroke-width="2"/><path d="M22,1.5 L28,8" fill="none" stroke="#bbb" stroke-width="1.5"/><path d="M21,8.5 H28 V14" fill="none" stroke="#111" stroke-width="3"/><path d="M0,35 H18" fill="none" stroke="#111" stroke-width="3"/><rect x="25.5" y="30" width="2.5" height="5" fill="#111"/><rect x="7" y="8.7" width="12" height="2.6" rx="1.3" fill="#0000ff"/><rect x="7" y="13.2" width="14" height="2.6" rx="1.3" fill="#0000ff"/><rect x="7" y="17.7" width="12" height="2.6" rx="1.3" fill="#0000ff"/><rect x="7" y="22.2" width="12" height="2.6" rx="1.3" fill="#0000ff"/><rect x="7" y="26.7" width="12" height="2.6" rx="1.3" fill="#0000ff"/><path d="M20,37 V17 H28 Q33,17 33,22.5 Q33,28 28,28 H25 V37z M25,21 V24.5 H27.5 Q28.7,24.5 28.7,22.75 Q28.7,21 27.5,21z" fill="#ff4a4a" fill-rule="evenodd"/></svg>
<svg style="position:absolute;left:319px;top:820.5px" width="37" height="38" viewBox="0 0 37 38"><path d="M1.5,35 V1.5 H22 L28,8 V35z" fill="#f4f4f4"/><path d="M1.5,35 V1.5 H22" fill="none" stroke="#8a8a8a" stroke-width="2"/><path d="M22,1.5 L28,8" fill="none" stroke="#bbb" stroke-width="1.5"/><path d="M21,8.5 H28 V14" fill="none" stroke="#111" stroke-width="3"/><path d="M0,35 H18" fill="none" stroke="#111" stroke-width="3"/><rect x="25.5" y="30" width="2.5" height="5" fill="#111"/><rect x="7" y="8.7" width="12" height="2.6" rx="1.3" fill="#0000ff"/><rect x="7" y="13.2" width="14" height="2.6" rx="1.3" fill="#0000ff"/><rect x="7" y="17.7" width="12" height="2.6" rx="1.3" fill="#0000ff"/><rect x="7" y="22.2" width="12" height="2.6" rx="1.3" fill="#0000ff"/><rect x="7" y="26.7" width="12" height="2.6" rx="1.3" fill="#0000ff"/><path d="M20,37 V17 H28 Q33,17 33,22.5 Q33,28 28,28 H25 V37z M25,21 V24.5 H27.5 Q28.7,24.5 28.7,22.75 Q28.7,21 27.5,21z" fill="#ff4a4a" fill-rule="evenodd"/></svg>
<div class="c" style="left:847.0px;top:346.5px;">    xEnable_MyRobot                 : BOOL;</div>
<div class="c" style="left:847.0px;top:383.8px;">    xAsyncStop_MyRobot              : BOOL;</div>
<div class="c" style="left:847.0px;top:421.0px;">    xSyncStopEL_MyRobot             : BOOL;</div>
<div class="c" style="left:847.0px;top:458.2px;">    xSyncStopEH_MyRobot             : BOOL;</div>
<div class="c" style="left:847.0px;top:495.5px;">    xStopEndOfCycle_MyRobot         : BOOL;</div>
<div class="c" style="left:847.0px;top:532.7px;">    xDiagQuit_MyRobot               : BOOL;</div>
<div class="c" style="left:847.0px;top:570.0px;">    etCmd_MyRobot                   : RM.ET_Cmd;</div>
<div class="c" style="left:847.0px;top:607.2px;">    xActive_MyRobot                 : BOOL;</div>
<div class="c" style="left:847.0px;top:644.4px;">    xReady_MyRobot                  : BOOL;</div>
<div class="c" style="left:847.0px;top:681.7px;">    etDiag_MyRobot                  : GD.ET_Diag;</div>
<div class="c" style="left:847.0px;top:718.9px;">    udiDiagExt_MyRobot              : UDINT;</div>
<div class="c" style="left:847.0px;top:756.2px;">    sDiagExt_MyRobot                : STRING[80];</div>
<div class="c" style="left:847.0px;top:954.1px;">SR_MyRobot(</div>
<div class="c" style="left:847.0px;top:991.3px;">    i_xEnable         := xEnable_MyRobot,</div>
<div class="c" style="left:847.0px;top:1028.5px;">    i_xAsyncStop      := xAsyncStop_MyRobot,</div>
<div class="c" style="left:847.0px;top:1065.7px;">    i_xSyncStopEL     := xSyncStopEL_MyRobot,</div>
<div class="c" style="left:847.0px;top:1102.9px;">    i_xSyncStopEH     := xSyncStopEH_MyRobot,</div>
<div class="c" style="left:847.0px;top:1140.1px;">    i_xStopEndOfCycle := xStopEndOfCycle_MyRobot,</div>
<div class="c" style="left:847.0px;top:1177.3px;">    i_xDiagQuit       := xDiagQuit_MyRobot,</div>
<div class="c" style="left:847.0px;top:1214.5px;">    iq_etCmd          := etCmd_MyRobot,</div>
<div class="c" style="left:847.0px;top:1251.7px;">    q_xActive         =&gt; xActive_MyRobot,</div>
<div class="c" style="left:847.0px;top:1288.9px;">    q_xReady          =&gt; xReady_MyRobot,</div>
<div class="c" style="left:847.0px;top:1326.1px;">    q_etDiag          =&gt; etDiag_MyRobot,</div>
<div class="c" style="left:847.0px;top:1363.3px;">    q_udiDiagExt      =&gt; udiDiagExt_MyRobot,</div>
<div class="u" style="left:2506.1px;top:264.2px;font-size:47px;line-height:47px;color:#00aeef;transform:scaleX(0.9494);font-weight:bold;">3.1</div>
<div class="u" style="left:2506.1px;top:867.2px;font-size:47px;line-height:47px;color:#00aeef;transform:scaleX(0.9494);font-weight:bold;">3.2</div>
</body></html>
